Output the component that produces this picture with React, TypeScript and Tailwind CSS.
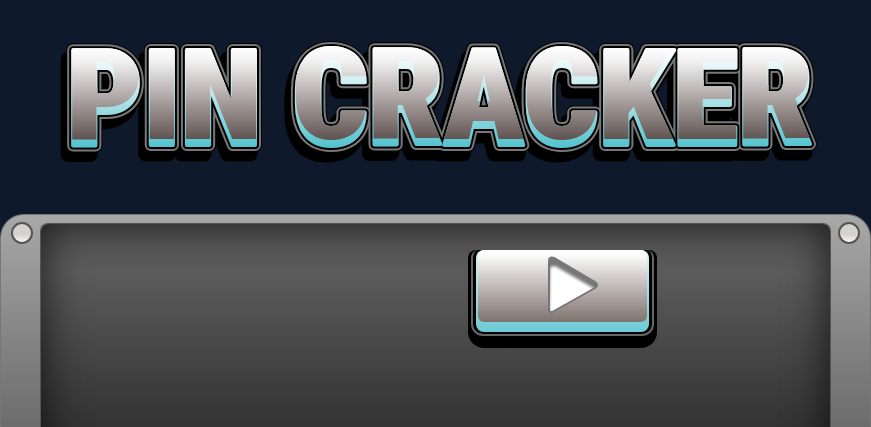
const TITLE = "PIN CRACKER";

export default function App() {
  return (
    <div className="flex min-h-screen flex-col bg-[#0e1a2b]">
      <header>
        <h1>
          <Wordmark />
        </h1>
      </header>
      <Cabinet>
        <PlayButton />
      </Cabinet>
    </div>
  );
}

function Wordmark() {
  return (
    <svg
      viewBox="0 0 871 214"
      className="block w-full font-['Roboto_Condensed','Liberation_Sans',sans-serif] text-[133px] font-black"
      strokeLinejoin="round"
    >
      <defs>
        <linearGradient id="steel" gradientUnits="userSpaceOnUse" x1="0" y1="55" x2="0" y2="153">
          <stop offset="0" stopColor="#ffffff" />
          <stop offset="0.15" stopColor="#f0eeee" />
          <stop offset="0.6" stopColor="#9d9492" />
          <stop offset="0.95" stopColor="#5c504d" />
        </linearGradient>
        <linearGradient id="aqua" gradientUnits="userSpaceOnUse" x1="0" y1="48" x2="0" y2="146">
          <stop offset="0" stopColor="#ffffff" />
          <stop offset="0.4" stopColor="#c8ecef" />
          <stop offset="1" stopColor="#55c3ce" />
        </linearGradient>
        <mask id="letters" maskUnits="userSpaceOnUse" x="0" y="0" width="871" height="214">
          <use href="#title" fill="white" stroke="white" strokeWidth="4" />
        </mask>
      </defs>

      {/* drop shadow, outer rim, then the letter faces */}
      <use href="#title" x="-5" y="9" fill="black" stroke="black" strokeWidth="15" />
      <use href="#title" fill="black" stroke="black" strokeWidth="14" />
      <use href="#title" fill="#777777" stroke="#777777" strokeWidth="12" />
      <use href="#title" fill="black" stroke="black" strokeWidth="8" />
      <use href="#title" fill="url(#aqua)" stroke="url(#aqua)" strokeWidth="4" />
      <g mask="url(#letters)">
        <g transform="translate(0 -7)" fill="url(#steel)" stroke="url(#steel)" strokeWidth="2">
          <text id="title" x="440" y="145" textAnchor="middle">
            {TITLE}
          </text>
        </g>
      </g>
    </svg>
  );
}

function Cabinet({ children }: { children: React.ReactNode }) {
  return (
    <main className="relative flex flex-1 rounded-t-3xl border border-b-0 border-[#777777] bg-linear-to-b from-[#a8a8a8] to-[#6c6c6c] px-[39px] pt-2">
      <Screw className="left-2.5" />
      <Screw className="right-2.5" />
      <div className="relative flex-1 overflow-hidden rounded-t-lg border border-b-0 border-[#555555] bg-linear-to-b from-[#5b5b5b] from-25% to-[#333333] pt-[26px] pl-[54%]">
        <div className="absolute inset-x-0 top-0 -bottom-20 rounded-t-lg shadow-[inset_0_0_44px_rgba(0,0,0,0.75)]" />
        {children}
      </div>
    </main>
  );
}

function Screw({ className }: { className: string }) {
  return (
    <span
      className={`absolute top-[7px] size-[22px] rounded-full border-2 border-[#555555] bg-linear-to-b from-[#d6d2d1] from-60% to-[#f8f8f8] ${className}`}
    />
  );
}

function PlayButton() {
  return (
    <button
      type="button"
      aria-label="Play"
      className="relative block w-[189px] cursor-pointer rounded-t-lg rounded-b-2xl bg-black px-[3px] pb-3"
    >
      <span className="block rounded-t-lg rounded-b-xl border-2 border-t-0 border-[#666666] px-[3px] pb-0.5">
        <span className="block rounded-lg bg-linear-to-b from-[#d9f3f5] to-[#6ccbd4] px-0.5 pb-2.5">
          <span className="flex h-[72px] justify-center rounded-md bg-linear-to-b from-white from-5% to-[#80736f] pt-1.5 pl-5">
            <PlayIcon />
          </span>
        </span>
      </span>
    </button>
  );
}

function PlayIcon() {
  return (
    <svg width="52" height="58" viewBox="0 0 52 58">
      <defs>
        <clipPath id="playShape">
          <path d="M2 5Q2 0 7 2L48 26Q52 29 48 32L7 55Q2 58 2 53Z" />
        </clipPath>
        <filter id="soften" x="-20%" y="-20%" width="140%" height="140%">
          <feGaussianBlur stdDeviation="1.8" />
        </filter>
      </defs>
      <g clipPath="url(#playShape)">
        <rect width="52" height="58" fill="#777777" />
        <path d="M3 11L8 10L48 33L7 64L2 60Z" fill="white" filter="url(#soften)" />
      </g>
      <path
        d="M2 5Q2 0 7 2L48 26Q52 29 48 32L7 55Q2 58 2 53Z"
        fill="none"
        stroke="#777777"
        strokeWidth="2"
      />
    </svg>
  );
}
